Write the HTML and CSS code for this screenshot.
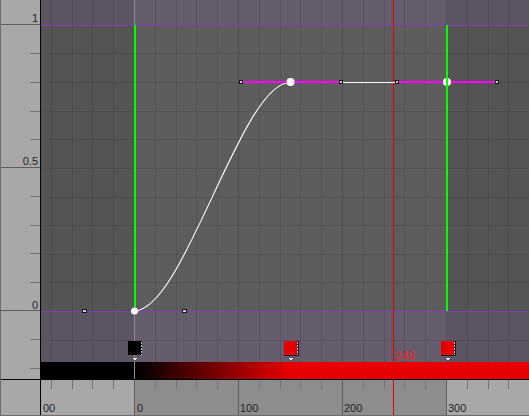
FILE: index.html
```html
<!DOCTYPE html>
<html>
<head>
<meta charset="utf-8">
<link rel="stylesheet" href="styles.css">
</head>
<body>
<div class="win">
  <div class="vaxis">
    <svg class="fill" width="39" height="379" viewBox="1 0 39 379">
      <rect class="axis-bg" x="1" y="0" width="39" height="379"/>
      <rect class="major-tick" x="1" y="24" width="39" height="1"/>
      <rect class="major-tick" x="1" y="167" width="39" height="1"/>
      <rect class="major-tick" x="1" y="310" width="39" height="1"/>
      <rect class="minor-tick" x="30" y="53" width="10" height="1"/>
      <rect class="minor-tick" x="30" y="82" width="10" height="1"/>
      <rect class="minor-tick" x="30" y="111" width="10" height="1"/>
      <rect class="minor-tick" x="30" y="139" width="10" height="1"/>
      <rect class="minor-tick" x="30" y="196" width="10" height="1"/>
      <rect class="minor-tick" x="30" y="225" width="10" height="1"/>
      <rect class="minor-tick" x="30" y="253" width="10" height="1"/>
      <rect class="minor-tick" x="30" y="282" width="10" height="1"/>
      <rect class="minor-tick" x="30" y="339" width="10" height="1"/>
      <rect class="minor-tick" x="30" y="368" width="10" height="1"/>
      <text class="lbl" x="38" y="22" text-anchor="end">1</text>
      <text class="lbl" x="38" y="165" text-anchor="end">0.5</text>
      <text class="lbl" x="38" y="309" text-anchor="end">0</text>
    </svg>
  </div>
  <div class="vline"></div>
  <div class="plot">
    <svg class="fill" width="488" height="379" viewBox="41 0 488 379">
      <defs>
        <linearGradient id="grad" gradientUnits="userSpaceOnUse" x1="136" y1="0" x2="290" y2="0">
          <stop offset="0" stop-color="#000"/>
          <stop offset="1" stop-color="#e60000"/>
        </linearGradient>
      </defs>
      <rect class="purple-out" x="41" y="0" width="488" height="25"/>
      <rect class="grey-out" x="41" y="25" width="488" height="286"/>
      <rect class="purple-out" x="41" y="311" width="488" height="51"/>
      <rect class="purple-in" x="134" y="0" width="312" height="25"/>
      <rect class="grey-in" x="134" y="25" width="312" height="286"/>
      <rect class="purple-in" x="134" y="311" width="312" height="51"/>
      <g class="grid">
        <rect x="51" y="0" width="1" height="362"/>
        <rect x="72" y="0" width="1" height="362"/>
        <rect x="92" y="0" width="1" height="362"/>
        <rect x="113" y="0" width="1" height="362"/>
        <rect x="155" y="0" width="1" height="362"/>
        <rect x="176" y="0" width="1" height="362"/>
        <rect x="196" y="0" width="1" height="362"/>
        <rect x="217" y="0" width="1" height="362"/>
        <rect x="259" y="0" width="1" height="362"/>
        <rect x="280" y="0" width="1" height="362"/>
        <rect x="300" y="0" width="1" height="362"/>
        <rect x="321" y="0" width="1" height="362"/>
        <rect x="363" y="0" width="1" height="362"/>
        <rect x="384" y="0" width="1" height="362"/>
        <rect x="404" y="0" width="1" height="362"/>
        <rect x="425" y="0" width="1" height="362"/>
        <rect x="467" y="0" width="1" height="362"/>
        <rect x="488" y="0" width="1" height="362"/>
        <rect x="508" y="0" width="1" height="362"/>
        <rect x="41" y="53" width="488" height="1"/>
        <rect x="41" y="82" width="488" height="1"/>
        <rect x="41" y="111" width="488" height="1"/>
        <rect x="41" y="139" width="488" height="1"/>
        <rect x="41" y="168" width="488" height="1"/>
        <rect x="41" y="197" width="488" height="1"/>
        <rect x="41" y="225" width="488" height="1"/>
        <rect x="41" y="254" width="488" height="1"/>
        <rect x="41" y="282" width="488" height="1"/>
        <rect x="41" y="340" width="488" height="1"/>
      </g>
      <g class="grid-major">
        <rect x="238" y="0" width="1" height="362"/>
        <rect x="342" y="0" width="1" height="362"/>
      </g>
      <line class="dash" x1="41" y1="25.5" x2="529" y2="25.5"/>
      <line class="dash" x1="41" y1="311.5" x2="529" y2="311.5"/>
      <rect class="zero-line" x="134" y="0" width="1" height="379"/>
      <rect class="bar-black" x="41" y="362" width="93" height="17"/>
      <rect x="134" y="362" width="395" height="17" fill="url(#grad)"/>
      <rect class="zero-line" x="134" y="362" width="1" height="17"/>
      <g class="marker">
        <rect class="mk-black" x="128" y="341" width="14" height="14"/>
        <line class="mk-dots" x1="141.5" y1="342" x2="141.5" y2="355"/>
        <polygon class="mk-tri" points="131.5,357.5 138.5,357.5 135,361"/>
      </g>
      <g class="marker">
        <rect class="mk-red" x="284" y="341" width="13" height="14"/>
        <rect class="mk-shadow" x="297" y="341" width="2" height="15"/>
        <rect class="mk-shadow" x="284" y="355" width="15" height="1"/>
        <line class="mk-dots" x1="297.5" y1="342" x2="297.5" y2="355"/>
        <polygon class="mk-tri" points="287.5,357.5 294.5,357.5 291,361"/>
      </g>
      <g class="marker">
        <rect class="mk-red" x="441" y="341" width="13" height="14"/>
        <rect class="mk-shadow" x="454" y="341" width="2" height="15"/>
        <rect class="mk-shadow" x="441" y="355" width="15" height="1"/>
        <line class="mk-dots" x1="454.5" y1="342" x2="454.5" y2="355"/>
        <polygon class="mk-tri" points="444.5,357.5 451.5,357.5 448,361"/>
      </g>
      <rect class="playhead" x="393" y="0" width="1" height="379"/>
      <text class="cur" x="395" y="360">249</text>
      <path class="curve" d="M134,311 C184,311 241,82.5 290,82.5 H447"/>
      <line class="tangent" x1="241" y1="82" x2="341" y2="82"/>
      <line class="tangent" x1="397" y1="82" x2="497" y2="82"/>
      <g class="handle">
        <rect x="82.5" y="309.5" width="4" height="3"/>
        <rect x="182.5" y="309.5" width="4" height="3"/>
        <rect x="239.5" y="80.5" width="3" height="3"/>
        <rect x="339.5" y="80.5" width="3" height="3"/>
        <rect x="395.5" y="80.5" width="3" height="3"/>
        <rect x="495.5" y="80.5" width="3" height="3"/>
      </g>
      <circle class="key" cx="290.5" cy="82" r="4"/>
      <circle class="key" cx="447" cy="82" r="4"/>
      <rect class="sel" x="134" y="25" width="2" height="282"/>
      <rect class="sel" x="446" y="25" width="2" height="286"/>
      <circle class="key" cx="134.5" cy="311" r="3.5"/>
    </svg>
  </div>
  <div class="hline"></div>
  <div class="corner"></div>
  <div class="vline"></div>
  <div class="taxis">
    <svg class="fill" width="488" height="35" viewBox="41 380 488 35">
      <rect class="axis-bg" x="41" y="380" width="488" height="35"/>
      <rect class="axis-in" x="134" y="380" width="312" height="35"/>
      <g class="minor-tick">
        <rect x="51" y="380" width="1" height="9"/>
        <rect x="72" y="380" width="1" height="9"/>
        <rect x="92" y="380" width="1" height="9"/>
        <rect x="113" y="380" width="1" height="9"/>
        <rect x="155" y="380" width="1" height="9"/>
        <rect x="176" y="380" width="1" height="9"/>
        <rect x="196" y="380" width="1" height="9"/>
        <rect x="217" y="380" width="1" height="9"/>
        <rect x="259" y="380" width="1" height="9"/>
        <rect x="280" y="380" width="1" height="9"/>
        <rect x="300" y="380" width="1" height="9"/>
        <rect x="321" y="380" width="1" height="9"/>
        <rect x="363" y="380" width="1" height="9"/>
        <rect x="384" y="380" width="1" height="9"/>
        <rect x="404" y="380" width="1" height="9"/>
        <rect x="425" y="380" width="1" height="9"/>
        <rect x="467" y="380" width="1" height="9"/>
        <rect x="488" y="380" width="1" height="9"/>
        <rect x="508" y="380" width="1" height="9"/>
      </g>
      <g class="major-tick">
        <rect x="134" y="380" width="1" height="35"/>
        <rect x="238" y="380" width="1" height="35"/>
        <rect x="342" y="380" width="1" height="35"/>
        <rect x="446" y="380" width="1" height="35"/>
      </g>
      <rect class="playhead" x="393" y="380" width="1" height="35"/>
      <text class="lbl" x="43" y="412">00</text>
      <text class="lbl" x="137" y="412">0</text>
      <text class="lbl" x="240" y="412">100</text>
      <text class="lbl" x="344" y="412">200</text>
      <text class="lbl" x="448" y="412">300</text>
    </svg>
  </div>
</div>
</body>
</html>
```

FILE: styles.css
```css
html, body {
  margin: 0;
  padding: 0;
  background: #a8a8a8;
}
body {
  font-family: "Liberation Sans", Arial, sans-serif;
}
.win {
  box-sizing: border-box;
  width: 529px;
  height: 416px;
  display: grid;
  grid-template-columns: 39px 1px 488px;
  grid-template-rows: 379px 1px 35px;
  border-left: 1px solid #6c6c6c;
  border-bottom: 1px solid #6c6c6c;
  overflow: hidden;
}
.vaxis, .plot, .taxis, .corner {
  overflow: hidden;
}
.fill {
  display: block;
}
.vline {
  background: #000;
}
.hline {
  grid-column: 1 / -1;
  background: #000;
}
.corner {
  background: #a8a8a8;
}
.axis-bg { fill: #a8a8a8; }
.axis-in { fill: #8d8d8d; }
.major-tick, .major-tick rect { fill: #5e5e5e; }
.minor-tick, .minor-tick rect { fill: #737373; }
.lbl {
  font-family: "Liberation Sans", Arial, sans-serif;
  font-size: 11px;
  fill: #1e1e2a;
}
.purple-out { fill: #5b5463; }
.purple-in { fill: #655c6d; }
.grey-out { fill: #545454; }
.grey-in { fill: #5d5d5d; }
.grid rect { fill: rgba(0, 0, 0, 0.09); }
.grid-major rect { fill: rgba(0, 0, 0, 0.16); }
.dash {
  stroke: #9233cf;
  stroke-width: 1;
  stroke-dasharray: 3 1;
}
.zero-line { fill: #8c8c8c; }
.bar-black { fill: #000; }
.mk-black { fill: #000; }
.mk-red { fill: #e40000; }
.mk-shadow { fill: #1a1a1a; }
.mk-dots {
  stroke: #b8b8b8;
  stroke-width: 1;
  stroke-dasharray: 2 1;
}
.mk-tri {
  fill: #e8e8e8;
  stroke: #222;
  stroke-width: 0.6;
}
.playhead { fill: #e80000; }
.cur {
  font-family: "Liberation Sans", Arial, sans-serif;
  font-size: 12px;
  fill: #f02424;
}
.curve {
  fill: none;
  stroke: #ffffff;
  stroke-width: 1.1;
}
.tangent {
  stroke: #ff00ff;
  stroke-width: 2;
}
.handle rect {
  fill: #d0d0d0;
  stroke: #141414;
  stroke-width: 1;
}
.key { fill: #ffffff; }
.sel { fill: #00ff00; }
```
